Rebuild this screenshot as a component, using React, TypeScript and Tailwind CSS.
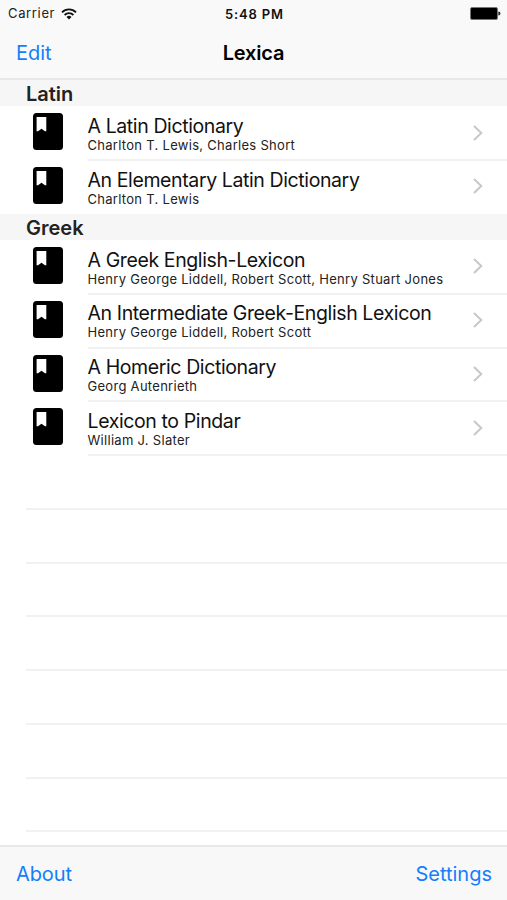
import { clsx } from 'clsx';

type Dictionary = {
  title: string;
  authors: string;
};

type Section = {
  name: string;
  items: Dictionary[];
};

const sections: Section[] = [
  {
    name: 'Latin',
    items: [
      { title: 'A Latin Dictionary', authors: 'Charlton T. Lewis, Charles Short' },
      { title: 'An Elementary Latin Dictionary', authors: 'Charlton T. Lewis' },
    ],
  },
  {
    name: 'Greek',
    items: [
      { title: 'A Greek English-Lexicon', authors: 'Henry George Liddell, Robert Scott, Henry Stuart Jones' },
      { title: 'An Intermediate Greek-English Lexicon', authors: 'Henry George Liddell, Robert Scott' },
      { title: 'A Homeric Dictionary', authors: 'Georg Autenrieth' },
      { title: 'Lexicon to Pindar', authors: 'William J. Slater' },
    ],
  },
];

const emptyRows = [0, 1, 2, 3, 4, 5, 6];

function WifiIcon() {
  return (
    <svg width="16" height="12" viewBox="0 0 16 12" fill="none" stroke="#111" strokeWidth="1.8">
      <path d="M1 4.3a10 10 0 0 1 14 0" />
      <path d="M3.6 7a6.3 6.3 0 0 1 8.8 0" />
      <path d="M8 11.6 5.5 9a3.6 3.6 0 0 1 5 0z" fill="#111" stroke="none" />
    </svg>
  );
}

function BatteryIcon() {
  return (
    <svg width="31" height="13" viewBox="0 0 31 13">
      <rect x="0.5" y="0.5" width="27" height="12" rx="1.5" fill="#000" stroke="#777" />
      <path d="M28.4 4.5c1.5.3 2 1 2 2s-.5 1.7-2 2z" fill="#222" />
    </svg>
  );
}

function BookIcon() {
  return (
    <svg width="30" height="37" viewBox="0 0 30 37" className="shrink-0">
      <rect width="30" height="37" rx="3.5" fill="#000" />
      <path d="M3.6 4h9.7v14.3H12l-3.5-2.5L5 18.300H3.600z" fill="#fff" />
    </svg>
  );
}

function Chevron() {
  return (
    <svg width="10" height="16" viewBox="0 0 10 16" fill="none" stroke="#c7c7cc" strokeWidth="2">
      <path d="M1 1l7.3 7L1 15" />
    </svg>
  );
}

function StatusBar() {
  return (
    <div className="grid h-[27px] grid-cols-3 items-center pl-2 pr-[6px] text-[13px] leading-none text-[#222]">
      <div className="flex items-center gap-[6px]">
        <span className="tracking-[0.65px]">Carrier</span>
        <WifiIcon />
      </div>
      <div className="whitespace-nowrap pt-px text-center font-semibold tracking-[0.85px] text-[#111]">5:48 PM</div>
      <div className="flex justify-end">
        <BatteryIcon />
      </div>
    </div>
  );
}

function DictionaryRow({ item, isLast }: { item: Dictionary; isLast: boolean }) {
  return (
    <div className="flex h-[53.75px] pl-[32.5px]">
      <div className="pt-[7px]">
        <BookIcon />
      </div>
      {/* the separator straddles the lower edge of the row */}
      <div
        className={clsx(
          'ml-[25px] flex h-[54.75px] flex-1 justify-between border-b-2 pr-6',
          isLast ? 'border-transparent' : 'border-[#f1f1f2]'
        )}
      >
        <div className="whitespace-nowrap pt-[7.5px]">
          <div className="text-[19.5px] leading-6 tracking-[-0.39px] text-[#111]">{item.title}</div>
          <div className="text-[13px] leading-[15px] tracking-[0.29px] text-[#222]">{item.authors}</div>
        </div>
        <div className="flex items-center">
          <Chevron />
        </div>
      </div>
    </div>
  );
}

export default function App() {
  return (
    <div className="flex h-[900px] w-[507px] flex-col overflow-hidden bg-white font-['Inter',sans-serif]">
      <header className="h-20 shrink-0 border-b-2 border-[#e8e8e8] bg-[#f9f9f9]">
        <StatusBar />
        <div className="grid h-[51px] grid-cols-3 items-center px-4 text-[20px]">
          <a className="text-[#147efb]">Edit</a>
          <h1 className="text-center font-semibold tracking-[-0.2px] text-black">Lexica</h1>
        </div>
      </header>

      <main className="min-h-0 flex-1 overflow-hidden">
        {sections.map((section, i) => (
          <section key={section.name}>
            <h2 className="h-[26.25px] bg-[#f6f6f6] pl-[26px] text-[20px] font-semibold leading-[28px] text-[#222]">
              {section.name}
            </h2>
            {section.items.map((item, j) => (
              <DictionaryRow
                key={item.title}
                item={item}
                isLast={i < sections.length - 1 && j === section.items.length - 1}
              />
            ))}
          </section>
        ))}
        {emptyRows.map((row) => (
          <div key={row} className="ml-[26px] h-[53.75px]">
            <div className="h-[54.75px] border-b-2 border-[#f1f1f2]" />
          </div>
        ))}
      </main>

      <footer className="flex h-[55px] shrink-0 items-center justify-between border-t-2 border-[#e8e8e8] bg-[#f8f8f8] pl-4 pr-[15px] text-[20px] text-[#147efb]">
        <a className="tracking-[-0.1px]">About</a>
        <a>Settings</a>
      </footer>
    </div>
  );
}
